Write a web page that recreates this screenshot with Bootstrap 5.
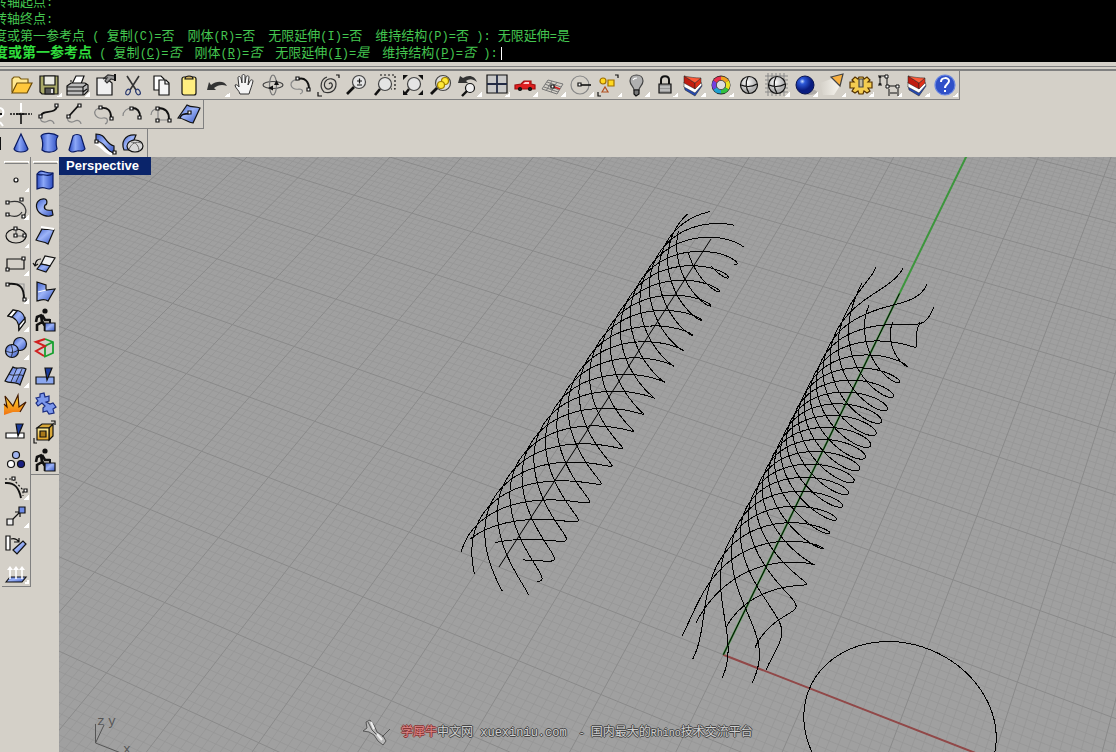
<!DOCTYPE html>
<html lang="zh-CN">
<head>
<meta charset="utf-8">
<meta name="viewport" content="width=device-width, initial-scale=1">
<title>Rhinoceros - Perspective</title>
<link rel="stylesheet" href="https://cdn.jsdelivr.net/npm/bootstrap@5.3.0/dist/css/bootstrap.min.css">
<style>
:root{--face:#d4d0c8;--edge:#808080}
body{background:var(--face);font-family:"Liberation Sans","Noto Sans CJK SC",sans-serif}
.console{height:62px;background:#000;color:#44c650;font:13px/17px "Noto Sans CJK SC",sans-serif}
.console p{height:17px;line-height:17px;margin:0 0 0 -6px;white-space:pre}
.console p.first{margin-top:-8px}
.console .opts{gap:13px}
.console .mono{font:12px/17px "Liberation Mono",monospace}
.console .lead-in{margin-right:-13px}
.console b{font-size:14px;line-height:17px;color:#2fdc3c}
.console input{width:10px;height:13px;background:none;border:0;border-left:1px solid #fff;padding:0;margin-left:3px;vertical-align:-2px}
.groove{height:9px;border-bottom:2px solid var(--edge)}
.groove::before{content:"";display:block;height:5px;border-bottom:1px solid var(--edge)}
.toolrow{width:max-content;border-bottom:1px solid var(--edge);border-right:1px solid var(--edge)}
.toolrow.main{padding-left:7px}
.toolrow.last{border-bottom:0}
.stub{width:7px;overflow:hidden}
.tool{position:relative;display:block;flex:none;width:28px;height:28px;padding:0;border:0;background:none;line-height:0}
.tool:hover{outline:1px solid #fff}
.tool svg{width:28px;height:28px;fill:none;stroke:#111;stroke-width:1.2}
.fly::after{content:"";position:absolute;right:1px;bottom:2px;width:5px;height:5px;background:linear-gradient(135deg,transparent 50%,#fff 50%)}
.side{width:59px;padding-left:2px}
.rail{width:28px;border-right:1px solid var(--edge);border-bottom:1px solid var(--edge);box-sizing:content-box;align-self:flex-start}
.rail.second{border-right:0}
.grip{height:9px;padding:4px 1px 0 2px}
.grip::before{content:"";display:block;height:3px;border:1px solid #fff;border-bottom-color:var(--edge)}
.view{background:#a0a0a0;min-width:0}
.view>svg{position:absolute;inset:0;width:100%;height:100%}
.cap{position:absolute;left:0;top:0;height:18px;width:92px;padding-left:7px;background:#0a246a;color:#fff;font:bold 13px/18px "Liberation Sans",sans-serif;margin:0}
.water{position:absolute;left:303px;bottom:6px;color:#d0d0d0;font:12px/24px "Noto Sans CJK SC",sans-serif;white-space:pre;text-shadow:1px 0 #444,-1px 0 #444,0 1px #444,0 -1px #444}
.water svg{width:30px;height:28px;margin-right:9px}
.water .red{color:#d88;text-shadow:1px 0 #833,-1px 0 #833,0 1px #833,0 -1px #833}
.water .lat{font-family:"Liberation Mono",monospace}
.water .nar{font-size:10px}
</style>
</head>
<body class="vh-100 d-flex flex-column overflow-hidden">
<svg width="0" height="0" class="position-absolute" aria-hidden="true"><defs>
<linearGradient id="gb" x1="0" y1="0" x2="1" y2="1"><stop offset="0" stop-color="#3c5cc8"/><stop offset=".45" stop-color="#9db4f8"/><stop offset="1" stop-color="#3454c0"/></linearGradient>
<linearGradient id="gc"><stop offset="0" stop-color="#2c4cc0"/><stop offset=".4" stop-color="#8ca8f8"/><stop offset="1" stop-color="#2c4cc0"/></linearGradient>
<linearGradient id="gy" x1="0" y1="0" x2="0" y2="1"><stop offset="0" stop-color="#fff2a0"/><stop offset="1" stop-color="#e0a020"/></linearGradient>
<linearGradient id="gf" x1="0" y1="0" x2="0" y2="1"><stop offset="0" stop-color="#ffe030"/><stop offset="1" stop-color="#f07010"/></linearGradient>
<linearGradient id="gl"><stop offset="0" stop-color="#d4d0c8"/><stop offset="1" stop-color="#f8f6f0"/></linearGradient>
<radialGradient id="gs" cx=".35" cy=".3"><stop offset="0" stop-color="#c8dcff"/><stop offset=".3" stop-color="#2c58d8"/><stop offset="1" stop-color="#0a1c80"/></radialGradient>
<radialGradient id="gw" cx=".4" cy=".35"><stop offset="0" stop-color="#fff"/><stop offset="1" stop-color="#b0b0b0"/></radialGradient>
<g id="wedge" stroke="#222" stroke-width=".5"><path d="M5 15l1 4 10 6 7-10-1-3-6 8z" fill="#2448b0"/><path d="M5 11v5l11 6 7-8-1-3-6 6z" fill="#fff"/><path d="M5 5v7l11 6v-6z" fill="#c01c10"/><path d="M16 12v6l6-6V7z" fill="#e03018"/><path d="M5 5l11 7 6-5C16 7 10 6 5 5z" fill="#ff5a38"/></g>
<g id="worker"><circle cx="14" cy="5" r="2.600" fill="#111" stroke="none"/><path d="M11 9L6 11l-1 5M10 9l1 7-5 3v6M11 15l3 5v5M11 9l3 5h5" stroke-width="2.600"/><path d="M14 17h10v8H14z" fill="url(#gb)"/><path d="M19 17v-4" stroke-width="2"/></g>
</defs></svg>

<header class="console overflow-hidden flex-shrink-0" lang="zh-CN">
<p class="first">转轴起点<span class="mono">:</span></p>
<p>转轴终点<span class="mono">:</span></p>
<p class="d-flex opts"><span class="lead-in">度或第一参考点<span class="mono"> ( </span></span><span>复制<span class="mono">(C)=</span>否</span><span>刚体<span class="mono">(R)=</span>否</span><span>无限延伸<span class="mono">(I)=</span>否</span><span>维持结构<span class="mono">(P)=</span>否<span class="mono"> ): </span>无限延伸<span class="mono">=</span>是</span></p>
<p class="d-flex opts"><label class="lead-in" for="cmd"><b>度或第一参考点</b><span class="mono"> ( </span></label><span>复制<span class="mono">(<u>C</u>)=</span><i>否</i></span><span>刚体<span class="mono">(<u>R</u>)=</span><i>否</i></span><span>无限延伸<span class="mono">(<u>I</u>)=</span><i>是</i></span><span>维持结构<span class="mono">(<u>P</u>)=</span><i>否</i><span class="mono"> ):</span><input id="cmd" type="text"></span></p>
</header>
<div class="groove flex-shrink-0"></div>

<nav class="toolrow main d-flex flex-shrink-0" aria-label="Standard">
<button class="tool" title="Open"><svg><path d="M5 21V8l2-2h5l2 2h7v4" fill="#ffe890" stroke="#7a5a10"/><path d="M5 22l5-10h15l-5 10z" fill="#ffc83c" stroke="#6a4a08"/></svg></button>
<button class="tool fly" title="Save"><svg><path d="M5 5h18v18H7l-2-2z" fill="#a8a868"/><path d="M9 5h11v9H9z" fill="#e8e8e0"/><path d="M10 17h9v6h-9z" fill="#555"/><path d="M16 18h2v4h-2z" fill="#ddd" stroke="none"/></svg></button>
<button class="tool fly" title="Print"><svg><path d="M9 13l4-8h8l-3 8z" fill="#fff"/><path d="M4 15l4-3h14l3 2v6l-4 4H4z" fill="#bbb"/><path d="M4 16h16l4-3M4 20h16v4M20 16v5M7 10h2M20 21l4-3"/></svg></button>
<button class="tool" title="Document properties"><svg><path d="M6 7h9l6 5v12H6z" fill="#f0f0f0"/><path d="M12 8l5-4 7 1v4l-4-1-4 4-2-2 2-3z" fill="#999" stroke="#333"/><path d="M24 3v7" stroke-width="2"/></svg></button>
<button class="tool" title="Cut"><svg><path d="M8 5l9 14M20 5l-9 14" stroke="#333" stroke-width="1.600"/><ellipse cx="9" cy="21" rx="2" ry="3" stroke="#2a3a70" transform="rotate(30 9 21)"/><ellipse cx="19" cy="21" rx="2" ry="3" stroke="#2a3a70" transform="rotate(-30 19 21)"/></svg></button>
<button class="tool" title="Copy"><svg><path d="M7 5h7l3 3v11H7z" fill="#fff"/><path d="M12 9h7l3 3v12H12z" fill="#f4f4f4"/><path d="M18 9v4h4"/></svg></button>
<button class="tool" title="Paste"><svg><rect x="7" y="6" width="14" height="18" rx="2" fill="#ffee80"/><path d="M10 8c0-4 8-4 8 0z" fill="#d0b060"/></svg></button>
<button class="tool fly" title="Undo"><svg><path d="M4 19l2-8 2 3c6-5 14-4 16 1-5-2-9-1-13 2l2 2z" fill="#333" stroke="none"/></svg></button>
<button class="tool" title="Pan"><svg><path d="M9 23c-1-4-5-6-5-9 2-1 3 1 4 2L7 7c0-2 2-2 3 0l1 5V5c0-2 3-2 3 0v7l1-6c1-2 3-1 3 0l-1 8 2-4c1-2 3-1 3 0-1 5-3 9-4 13z" fill="#f4f4f4" stroke="#333" stroke-width="1"/></svg></button>
<button class="tool" title="Rotate view"><svg stroke-width="1"><ellipse cx="14" cy="14" rx="10" ry="3.500" stroke="#444"/><ellipse cx="14" cy="14" rx="3.500" ry="10" stroke="#777"/><path d="M9 17l5-2.500v5zM17.500 9l2.500 5h-5z" fill="#111" stroke="none"/></svg></button>
<button class="tool" title="Arc blend"><svg><path d="M11 9C1 8 2 20 12 18c5 0 4 4 1 5" stroke="#888"/><path d="M11 8c7-2 11 3 11 10" stroke-width="2"/><path d="M9 6h3v3H9zM20 17h3v3h-3z" fill="#fff"/></svg></button>
<button class="tool" title="Spiral"><svg><path d="M14 13c2-3 5 1 2 4-4 3-8-1-6-6 3-5 11-4 11 2 0 7-6 10-12 8M9 21C4 16 6 8 12 6" stroke="#333"/><path d="M21 4h3v3M3 21v4h4"/></svg></button>
<button class="tool" title="Zoom dynamic"><svg><circle cx="16" cy="11" r="6.500" fill="#e4e4e4" stroke="#444"/><path d="M11 16l-7 7" stroke-width="2.600"/><path d="M14 10h5M16.500 7.500v5M14 14h5"/></svg></button>
<button class="tool" title="Zoom window"><svg><circle cx="14" cy="13" r="6.500" fill="#e4e4e4" stroke="#444"/><path d="M9 18l-5 6" stroke-width="2.600"/><path d="M9 4h15v14h-4" stroke-dasharray="2 2"/></svg></button>
<button class="tool" title="Zoom extents"><svg><circle cx="15" cy="13" r="6.500" fill="#e4e4e4" stroke="#444"/><path d="M10 18l-4 5" stroke-width="2.400"/><path d="M4 4h5L4 9zM24 4h-5l5 5zM4 24v-5l5 5zM24 24v-5l-5 5z" fill="#111" stroke="none"/></svg></button>
<button class="tool" title="Zoom selected"><svg><circle cx="16" cy="12" r="7.500" fill="#ddd" stroke="#444"/><circle cx="18" cy="10" r="3.500" fill="#ffe838" stroke="#a08000"/><circle cx="14" cy="14" r="3.500" fill="#ffe838" stroke="#a08000"/><path d="M10 17l-6 6" stroke-width="2.800"/></svg></button>
<button class="tool fly" title="Undo view"><svg><path d="M3 12l2-7 3 2c6-4 12-2 14 4-5-4-8-3-11-1l2 2z" fill="#333" stroke="none"/><circle cx="15" cy="17" r="4.500" fill="#eee"/><path d="M12 20l-5 5" stroke-width="2.400"/></svg></button>
<button class="tool fly" title="Four viewports"><svg><path d="M4 4h20v18H4z" fill="#c8c8c8"/><path d="M14 4v18M4 13h20" stroke="#222a44" stroke-width="1.800"/></svg></button>
<button class="tool fly" title="Set view"><svg><path d="M4 14l6-1 3-3h7v3l4 1v4H4z" fill="#e02020" stroke="#a01010"/><path d="M14 11h4v2h-6z" fill="#fcc" stroke="none"/><circle cx="9" cy="18" r="1.500" fill="#222"/><circle cx="19" cy="18" r="1.500" fill="#222"/></svg></button>
<button class="tool fly" title="Set CPlane"><svg><g stroke="#777" stroke-width="1"><path d="M9 9l15 4-6 10L3 18zM8 11l14 5M6 13l14 6M5 16l14 5M13 10L7 20M18 11l-6 10"/></g><path d="M13 15l8 3" stroke="#d02020" stroke-width="1.600"/><path d="M12 14h3v3h-3z" fill="#fff"/></svg></button>
<button class="tool fly" title="Circle"><svg><circle cx="13" cy="14" r="9" stroke="#888"/><path d="M14 14h10" stroke-width="1.600"/><path d="M11 12h3v3h-3z" fill="#fff"/></svg></button>
<button class="tool fly" title="Select"><svg><circle cx="8" cy="10" r="3" fill="#ffd820" stroke="#a07000"/><path d="M13 9h6v6h-6z" fill="#ffd820" stroke="#a07000"/><path d="M7 21l3-5 3 5z" stroke="#b05020"/><path d="M20 4h3v3M3 21v4h3"/></svg></button>
<button class="tool fly" title="Hide"><svg><path d="M11 19c0-3-4-5-4-9 0-8 13-8 13 0 0 4-4 6-4 9z" fill="#b0b0b0" stroke="#444"/><path d="M11 19v4l2 2 3-2v-4z" fill="#777"/><path d="M10 9c1-2 3-2 4-2" stroke="#fff"/></svg></button>
<button class="tool fly" title="Lock"><svg><path d="M10 13V9c0-5 8-5 8 0v4" stroke-width="2"/><path d="M8 13h12v9H8z" fill="#999"/><path d="M9 16h10M9 19h10" stroke="#ddd" stroke-width="1"/></svg></button>
<button class="tool fly" title="Layers"><svg><use href="#wedge"/></svg></button>
<button class="tool fly" title="Properties"><svg><circle cx="14" cy="14" r="9.500" fill="#222" stroke="none"/><g stroke-width="4"><path d="M14 7.500a7 7 0 0 1 6 3" stroke="#f0a020"/><path d="M20 10.500a7 7 0 0 1 0 7" stroke="#e8e020"/><path d="M20 17.500a7 7 0 0 1-6 3" stroke="#30c040"/><path d="M14 20.500a7 7 0 0 1-6-3" stroke="#20a0d0"/><path d="M8 17.500a7 7 0 0 1 0-7" stroke="#7040e0"/><path d="M8 10.500a7 7 0 0 1 6-3" stroke="#e83050"/></g><circle cx="14" cy="14" r="4.600" fill="#ddd" stroke="#444" stroke-width=".8"/></svg></button>
<button class="tool" title="Wireframe"><svg><circle cx="14" cy="14" r="8.500" fill="url(#gw)"/><path d="M13 6c-3 5-2 12 1 16M6 14c5 2 11 2 16-1"/></svg></button>
<button class="tool fly" title="Shade"><svg><path d="M2 5h23M2 9h23M2 13h23M2 17h23M2 21h23M5 2v23M9 2v23M13 2v23M17 2v23M21 2v23" stroke="#888" stroke-width="1"/><circle cx="14" cy="14" r="8.500" fill="url(#gw)"/><path d="M13 6c-3 5-2 12 1 16M6 14c5 2 11 2 16-1"/></svg></button>
<button class="tool fly" title="Render"><svg><ellipse cx="18" cy="21" rx="8" ry="3" fill="#b0aca8" stroke="none"/><circle cx="14" cy="14" r="9" fill="url(#gs)" stroke="#0a1450" stroke-width="1"/></svg></button>
<button class="tool fly" title="Spotlight"><svg><path d="M1 12l14-5 7 6-7 11H4z" fill="url(#gl)" stroke="none"/><path d="M12 6l12-3-3 12z" fill="#f8b040" stroke="#444"/></svg></button>
<button class="tool fly" title="Options"><svg><path d="M12 6h4l1 2 3-2 3 3-2 2h4v6h-4l2 3-3 2-3-2-1 3h-4l-1-3-3 2-3-2 2-3H3v-6h4L5 9l3-3 3 2z" fill="#f4cc50" stroke="#553300"/><path d="M12 8h4v8h-4z" fill="#c0b8a0" stroke="#444"/></svg></button>
<button class="tool fly" title="Dimension"><svg><g stroke-width="1"><path d="M3 5h7M3 14h4M5 5v9M4 7l1-2 1 2M4 12l1 2 1-2M14 18v7M23 18v7M15 22h7M12 6v9h9"/><path d="M10 4h3v3h-3zM11 14h3v3h-3zM21 14h3v3h-3z" fill="#fff"/></g></svg></button>
<button class="tool fly" title="Layer states"><svg><use href="#wedge"/></svg></button>
<button class="tool fly" title="Help"><svg><circle cx="14" cy="14" r="10" fill="#2f50c8" stroke="#6c88e0"/><path d="M10 11c0-5 8-5 8-1 0 3-4 3-4 7M14 19v2" stroke="#fff" stroke-width="2"/></svg></button>
</nav>

<nav class="toolrow d-flex flex-shrink-0" aria-label="Curve tools">
<span class="stub"><svg width="7" height="28" fill="none" stroke="#fff" stroke-width="2"><path d="M0 8c5 1 4 8 0 9M0 22l3 4"/><path d="M0 14h2" stroke="#111"/></svg></span>
<button class="tool" title="Trim"><svg><path d="M3 14h22" stroke-dasharray="2 1" stroke-width="1.600"/><path d="M9 14h9M14 14v10" stroke-width="1.600"/><path d="M14 3v9" stroke="#fff" stroke-width="2"/></svg></button>
<button class="tool" title="Extend curve"><svg><path d="M6 17c-2 5 4 6 7 4s6 1 6 3" stroke="#888"/><path d="M6 16c1-7 15-1 16-10" stroke-width="1.800"/><path d="M4 15h3v3H4zM20 4h3v3h-3z" fill="#fff"/></svg></button>
<button class="tool" title="Extend by line"><svg><path d="M5 17c-2 5 4 6 7 4s6 1 6 3" stroke="#888"/><path d="M6 16L16 5" stroke-width="1.800"/><path d="M4 15h3v3H4zM15 4h3v3h-3z" fill="#fff"/></svg></button>
<button class="tool" title="Extend by arc"><svg><path d="M10 8C0 8 3 20 12 18c6-1 5 5 2 6" stroke="#888"/><path d="M10 8c7-1 10 3 10 9" stroke-width="1.800"/><path d="M8 6h3v3H8zM19 17h3v3h-3z" fill="#fff"/></svg></button>
<button class="tool" title="Arc to point"><svg><path d="M4 16c0-5 4-8 9-8" stroke="#888"/><path d="M13 8c6 0 8 4 8 9" stroke-width="1.800"/><path d="M11 7h3v3h-3zM19 16h3v3h-3z" fill="#fff"/></svg></button>
<button class="tool" title="Arc with center"><svg><path d="M4 15c0-4 3-6 7-7M11 8v12h11" stroke="#888"/><path d="M11 8c8 0 11 5 11 11" stroke-width="1.800"/><path d="M9 7h3v3H9zM9 19h3v3H9zM21 19h3v3h-3z" fill="#fff"/></svg></button>
<button class="tool" title="Curve on surface"><svg><path d="M3 18L12 5c5 3 8 1 13 3l-7 15c-6-1-9-5-15-5z" fill="url(#gb)"/><path d="M5 18c2-6 6-3 10-5" stroke-width="1.600"/><path d="M13 11h3v3h-3z" fill="#fff"/></svg></button>
</nav>

<nav class="toolrow last d-flex flex-shrink-0" aria-label="Surface tools">
<span class="stub"><svg width="7" height="28"><path d="M0 8h1v13H0z" fill="#111"/></svg></span>
<button class="tool" title="Cone"><svg><path d="M14 5l7 15c-2 4-12 4-14 0z" fill="url(#gc)" stroke="#0a1a60"/></svg></button>
<button class="tool" title="Loft"><svg><path d="M6 7c3-4 13-3 17 0-3 4-2 9-1 13-3 4-12 4-15 1 1-4 1-9-1-14z" fill="url(#gc)" stroke="#0a1a60"/></svg></button>
<button class="tool" title="Tapered extrusion"><svg><path d="M10 7c2-2 6-2 8 0l4 13c-3 4-4 1-8 2s-6 2-8-1z" fill="url(#gc)" stroke="#0a1a60"/></svg></button>
<button class="tool" title="Sweep"><svg><path d="M4 14c8 2 8 9 17 11" stroke="#fff" stroke-width="3"/><path d="M5 5c11 0 8 9 18 12v7C14 22 14 12 5 12z" fill="url(#gb)"/><path d="M4 11h3v3H4zM22 22h3v3h-3z" fill="#fff"/></svg></button>
<button class="tool" title="Extrude along curve"><svg><path d="M5 21c-3-7 0-16 12-15l-2 5c-4 0-3 6-2 10z" fill="url(#gb)"/><ellipse cx="16" cy="17" rx="8" ry="6" fill="#d8d8d8"/><path d="M10 20c3-6 7-8 12-6M12 13c5 0 8 4 8 9" stroke="#666" stroke-width="1"/></svg></button>
</nav>

<div class="d-flex flex-grow-1 overflow-hidden">
<aside class="side d-flex flex-shrink-0">
<div class="rail"><div class="grip"></div>
<button class="tool fly" title="Point"><svg><circle cx="14" cy="14" r="2" fill="#fff"/></svg></button>
<button class="tool fly" title="Curve"><svg><path d="M7 8c17-4 20 12 14 14M6 21c5 2 11 2 14-3" stroke="#333"/><path d="M4 7h3v3H4zM18 4h3v3h-3zM4 19h3v3H4zM20 21h3v3h-3z" fill="#fff"/></svg></button>
<button class="tool fly" title="Ellipse"><svg><ellipse cx="14" cy="14" rx="10" ry="7"/><path d="M14 7v7h9" stroke="#555"/><path d="M12 5h3v3h-3zM12 12h3v3h-3zM21 12h3v3h-3z" fill="#fff"/></svg></button>
<button class="tool fly" title="Rectangle"><svg><path d="M5 9h17v10H5z"/><path d="M20 7h3v3h-3zM4 18h3v3H4z" fill="#fff"/></svg></button>
<button class="tool fly" title="Fillet"><svg><path d="M15 6h7v9" stroke="#999"/><path d="M6 6c12-1 16 3 16 15" stroke-width="2"/><path d="M4 5h3v3H4zM21 20h3v3h-3z" fill="#fff"/></svg></button>
<button class="tool fly" title="Surface"><svg><path d="M6 10l5-6c9 0 12 5 12 12l-6 8c0-9-4-13-11-14z" fill="url(#gb)"/><path d="M6 10l5-6 4 1-5 6zM17 19l6-7v4l-6 8z" fill="#fff"/></svg></button>
<button class="tool fly" title="Solids"><svg><circle cx="18" cy="10" r="6.500" fill="url(#gb)"/><circle cx="10" cy="17" r="6.500" fill="url(#gb)"/><path d="M4 17c4 2 8 2 12-1M9 11c2 4 2 8 0 12" stroke-width=".8"/></svg></button>
<button class="tool fly" title="Surface from network"><svg><path d="M3 19L11 5c4 3 8-1 13 2l-6 16c-4-4-10-1-15-4z" fill="url(#gb)"/><path d="M7 12c5 3 9-1 15 2M15 6L9 20M20 7l-6 13" stroke-width=".8"/></svg></button>
<button class="tool" title="Explode"><svg><path d="M2 25V14l3 3L3 6l8 10 5-11 1 12 7-5-6 10h-7z" fill="url(#gf)" stroke="none"/><path d="M2 14l3 3L3 6l8 10 5-11 1 12 7-5-6 10" stroke="#401800"/></svg></button>
<button class="tool" title="Trim"><svg><path d="M4 15h18v5H4z" fill="#fff"/><path d="M14 6h7l-5 12z" fill="#1c3c9c"/></svg></button>
<button class="tool" title="Group"><svg><circle cx="14" cy="9" r="3.500" fill="#a0b4f0"/><circle cx="9" cy="18" r="3.500" fill="#fff"/><circle cx="19" cy="18" r="3.500" fill="#1a2080"/></svg></button>
<button class="tool fly" title="Edit points"><svg><path d="M3 5h8l10 11v6" stroke-dasharray="2 2"/><path d="M3 9c10-1 14 5 16 15" stroke-width="2"/><path d="M10 3h3v3h-3zM22 15h3v3h-3z" fill="#fff"/></svg></button>
<button class="tool fly" title="Move"><svg><path d="M11 17l7-7M13 10h5v5"/><path d="M5 17h6v6H5z" fill="#eee"/><path d="M17 5h6v6h-6z" fill="#6f8ce8"/></svg></button>
<button class="tool" title="Orient"><svg><path d="M4 6h4v14H4z" fill="#fff"/><path d="M9 9c4-1 6 0 8 3M17 8v4h-5"/><path d="M11 20l10-9 3 3-9 10z" fill="url(#gb)"/></svg></button>
<button class="tool fly" title="Project"><svg><path d="M4 24l4-5h16l-4 5z" fill="url(#gb)"/><path d="M8 21V10M14 21V10M20 21V10" stroke="#fff" stroke-width="1.600"/><path d="M5 12l3-4 3 4zM11 12l3-4 3 4zM17 12l3-4 3 4z" fill="#fff" stroke="none"/></svg></button>
</div>
<div class="rail second"><div class="grip"></div>
<button class="tool" title="Extrude"><svg><path d="M6 8c3-4 5-3 8-2s5 1 8 1v14c-3 3-5 2-8 1s-5 0-8 1z" fill="url(#gc)" stroke="#0a1a60"/><path d="M6 8c3 2 5 0 8 1s5 1 8-2" stroke="#0a1a60"/></svg></button>
<button class="tool" title="Pipe"><svg><path d="M14 5C8 4 4 9 6 15s11 9 16 6l-1-5c-6 1-9-1-7-5 2 0 3-5 0-6z" fill="url(#gb)"/></svg></button>
<button class="tool" title="Plane"><svg><path d="M5 18l6-11c4 1 8 0 12 1l-6 14c-4-3-8-2-12-4z" fill="url(#gb)"/><path d="M10 5l13 2" stroke="#fff" stroke-width="2"/></svg></button>
<button class="tool" title="Extend surface"><svg><path d="M10 14l4-8 10 2-5 8z" fill="#eee"/><path d="M6 19l4-5 9 2-4 6z" fill="url(#gb)"/><path d="M10 9c-4 0-5 2-6 6M2 13l2 3 3-2"/></svg></button>
<button class="tool" title="Offset surface"><svg><path d="M6 4l9 3v5l9-1-7 12c-4-3-7-1-11 0z" fill="url(#gb)"/><path d="M15 12l-8 2" stroke="#fff"/></svg></button>
<button class="tool" title="Helper"><svg><use href="#worker"/></svg></button>
<button class="tool" title="Box"><svg><path d="M14 5l8 3v11l-9 4M14 12l8-4M14 12v10" stroke="#18a030" stroke-width="1.800"/><path d="M14 5L5 8l9 4-9 5 8 5" stroke="#d02020" stroke-width="2"/></svg></button>
<button class="tool" title="Split"><svg><path d="M5 15h18v7H5z" fill="#8ca8f0"/><path d="M14 6h7l-5 12z" fill="#1c3c9c"/></svg></button>
<button class="tool" title="Boolean"><svg><path d="M5 8l4-1V4l4-1 1 4 4-1v5l-3 1 4 2 3-1 3 4-3 2 1 4-5 1-2-3-4 1v-4l2-2-3-3-4 3-2-3 2-2z" fill="#7c98ec" stroke="#1a2c80"/></svg></button>
<button class="tool" title="Cap"><svg><path d="M6 10l5-4h11l-4 4zM18 10l4-4v12l-4 4z" fill="#d8a838"/><path d="M6 10h12v12H6z" fill="url(#gy)"/><path d="M9 13h6v6H9z" fill="#a87818"/><path d="M20 3h4v4M3 20v5h3"/></svg></button>
<button class="tool" title="Helper 2"><svg><use href="#worker"/></svg></button>
</div>
</aside>

<main class="view position-relative flex-grow-1 overflow-hidden">
<svg id="scene" role="img" aria-label="Perspective view"></svg>
<h1 class="cap">Perspective</h1>
<div class="water d-flex align-items-center"><svg viewBox="0 0 30 28"><path d="M1 13l4-3-1-6 4-2 4 5 3 7 6 4 3 5-3 4-5-4-4-6-5-3z" fill="#b8b8b8" stroke="#555"/><path d="M6 4l4 8 9 9M20 19l8-8" stroke="#555" fill="none"/><path d="M9 4l3 7M15 16l5 6" stroke="#eee" stroke-width="2"/></svg><span><span class="red">学犀牛</span>中文网<span class="lat"> xuexiniu.com<span class="nar">  - </span></span>国内最大的<span class="lat nar">Rhino</span>技术交流平台</span></div>
</main>
</div>

<script>
// Construction plane: grid coordinates to viewport pixels.
const OX = 59, OY = 157;
function plane(x, y) {
  const w = 1 - 0.01934 * x + 0.04068 * y;
  return [(70.63988 * x + 64.55448 * y + 723.31387) / w - OX,
          (20.33371 * x - 45.38529 * y + 654.66686) / w - OY];
}
const fmt = p => p[0].toFixed(1) + ' ' + p[1].toFixed(1);
const line = (a, b) => 'M' + fmt(a) + 'L' + fmt(b);
let minor = '', major = '';
for (let i = -180; i <= 160; i++) {
  const v = i / 10;
  const row = i >= -70 ? line(plane(-18, v), plane(12, v)) : '';
  const col = i <= 90 ? line(plane(v, -7), plane(v, 16)) : '';
  if (i % 10) minor += row + col; else major += row + col;
}

// A tube of eight strands that turn between a near and a far ellipse.
function tube(near, far, depth, ease) {
  const rim = (e, a) => [0, 1].map(k => e.c[k] - (k ? OY : OX) + Math.cos(a) * e.u[k] + Math.sin(a) * e.w[k]);
  let d = '';
  for (let s = 0; s < 8; s++) {
    for (let n = 0; n <= 400; n++) {
      const t = n / 400, a = s * Math.PI / 4 + ease(t) * 5 * Math.PI;
      const p = rim(near, a), q = rim(far, a), m = 1 - t + depth * t;
      d += (n ? 'L' : 'M') + fmt([0, 1].map(k => (p[k] * (1 - t) + depth * q[k] * t) / m));
    }
  }
  return d;
}
const left = tube({c: [499, 567], u: [38, 14.5], w: [3.5, 24.5]}, {c: [711, 239], u: [32.5, 8], w: [0.5, 27.5]}, 1.23, t => t);
const right = tube({c: [724, 653], u: [42, 17], w: [-2, 25]}, {c: [898, 295], u: [36, 12], w: [-5, 27]}, 1.26, t => t * t * (3 - 2 * t));

let ring = '';
for (let n = 0; n <= 120; n++) {
  const a = n * Math.PI / 60;
  ring += (n ? 'L' : 'M') + fmt(plane(2 + Math.cos(a), Math.sin(a)));
}
document.getElementById('scene').innerHTML =
  `<g fill="none" stroke-width="1">
  <path d="${minor}" stroke="#969696" stroke-opacity=".75"/>
  <path d="${major}" stroke="#8a8a8a"/>
  <path d="${line(plane(0, 0), plane(9, 0))}" stroke="#914848" stroke-width="2"/>
  <path d="${line(plane(0, 0), plane(0, 13))}" stroke="#3c963c" stroke-width="2"/>
  <path d="${line(plane(0, 0), plane(0, 6.3))}M440 410L652 82" stroke="#000"/>
  <path d="${left}${right}${ring}" stroke="#000" shape-rendering="crispEdges"/>
  <path d="M36.500 567V586L62 596M36.500 586L45 568" stroke="#555"/></g>
  <g fill="#555" font-family="Liberation Mono" font-size="13"><text x="38" y="568">z</text><text x="49" y="568">y</text><text x="64" y="596">x</text></g>`;
</script>
<script src="https://cdn.jsdelivr.net/npm/bootstrap@5.3.0/dist/js/bootstrap.bundle.min.js"></script>
</body>
</html>
